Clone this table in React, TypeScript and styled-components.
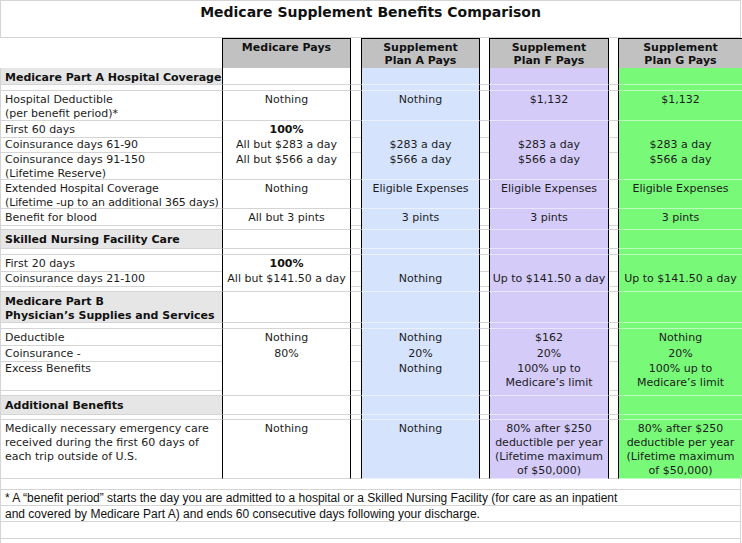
import React from 'react';
import styled, { createGlobalStyle, css } from 'styled-components';

const GlobalStyle = createGlobalStyle`
  html, body { margin: 0; padding: 0; background: #ffffff; }
  body { font-family: "DejaVu Sans", Verdana, sans-serif; color: #1c1c1c; }
`;

type Tone = 'm' | 'a' | 'f' | 'g';
type Lines = string | string[];

const COLS = '222px 129px 10px 119px 9px 120px 9px 124px';
const GRID = '#d4d4d4';
const TONES: Record<Tone, string> = {
  m: '#ffffff',
  a: '#d6e3fc',
  f: '#d4cbf9',
  g: '#78f978',
};

const Sheet = styled.div`
  width: 742px;
  height: 543px;
  overflow: hidden;
  display: flex;
  flex-direction: column;
`;

const TitleBar = styled.div`
  box-sizing: border-box;
  flex: none;
  width: 741px;
  height: 38px;
  border: 1px solid ${GRID};
  padding-top: 2px;
  text-align: center;
  font-size: 14px;
  line-height: 18px;
  font-weight: bold;
  color: #111;
`;

const Row = styled.div<{ $h: number }>`
  flex: none;
  display: grid;
  grid-template-columns: ${COLS};
  height: ${(p) => p.$h}px;
`;

const Cell = styled.div`
  box-sizing: border-box;
  border-bottom: 1px solid ${GRID};
  padding-top: 2px;
  font-size: 11px;
  line-height: 14px;
  white-space: nowrap;
`;

const Label = styled(Cell)<{ $section?: boolean; $tight?: boolean }>`
  border-left: 1px solid ${GRID};
  padding-left: 4px;
  overflow: hidden;
  letter-spacing: ${(p) => (p.$tight ? '-0.12px' : 'normal')};
  ${(p) =>
    p.$section &&
    css`
      background: #e6e6e6;
      font-weight: bold;
      padding-top: 3px;
      color: #111;
    `}
`;

const Gap = styled(Cell)``;

const Value = styled(Cell)<{ $tone: Tone }>`
  background: ${(p) => TONES[p.$tone]};
  text-align: center;
  border-left: 1px solid #000;
  border-right: ${(p) => (p.$tone === 'g' ? 'none' : '1px solid #000')};
  border-bottom-color: ${(p) => (p.$tone === 'm' ? GRID : 'rgba(255,255,255,0.5)')};
`;

const Strong = styled.b`
  font-weight: bold;
  color: #111;
`;

const HeadBlank = styled.div``;

const HeadCell = styled.div<{ $last?: boolean }>`
  box-sizing: border-box;
  background: #c1c1c1;
  border-top: 1px solid #000;
  border-left: 1px solid #000;
  border-right: ${(p) => (p.$last ? 'none' : '1px solid #000')};
  padding-top: 2px;
  text-align: center;
  font-size: 11px;
  line-height: 13px;
  font-weight: bold;
  color: #111;
`;

const FullCell = styled.div<{ $h: number }>`
  box-sizing: border-box;
  flex: none;
  width: 741px;
  height: ${(p) => p.$h}px;
  border-left: 1px solid ${GRID};
  border-right: 1px solid ${GRID};
  border-bottom: 1px solid ${GRID};
  padding: 1px 0 0 4px;
  font-family: "Liberation Sans", Arial, sans-serif;
  font-size: 12px;
  line-height: 14px;
  white-space: nowrap;
  color: #111;
`;

const renderLines = (v: Lines | undefined) => {
  if (v === undefined) return null;
  const arr = Array.isArray(v) ? v : [v];
  return arr.map((line, i) => (
    <React.Fragment key={i}>
      {i > 0 && <br />}
      {line}
    </React.Fragment>
  ));
};

type RowData =
  | { kind: 'section'; h: number; label: Lines }
  | { kind: 'spacer'; h: number }
  | {
      kind: 'data';
      h: number;
      label: Lines;
      m?: Lines;
      a?: Lines;
      f?: Lines;
      g?: Lines;
      boldM?: boolean;
      tight?: boolean;
    };

const rows: RowData[] = [
  { kind: 'section', h: 17, label: 'Medicare Part A Hospital Coverage' },
  { kind: 'spacer', h: 6 },
  {
    kind: 'data',
    h: 30,
    label: ['Hospital Deductible', '(per benefit period)*'],
    m: 'Nothing',
    a: 'Nothing',
    f: '$1,132',
    g: '$1,132',
  },
  { kind: 'data', h: 15, label: 'First 60 days', m: '100%', boldM: true },
  {
    kind: 'data',
    h: 15,
    label: 'Coinsurance days 61-90',
    m: 'All but $283 a day',
    a: '$283 a day',
    f: '$283 a day',
    g: '$283 a day',
  },
  {
    kind: 'data',
    h: 29,
    label: ['Coinsurance days 91-150', '(Lifetime Reserve)'],
    m: 'All but $566 a day',
    a: '$566 a day',
    f: '$566 a day',
    g: '$566 a day',
  },
  {
    kind: 'data',
    h: 29,
    label: ['Extended Hospital Coverage', '(Lifetime -up to an additional 365 days)'],
    m: 'Nothing',
    a: 'Eligible Expenses',
    f: 'Eligible Expenses',
    g: 'Eligible Expenses',
    tight: true,
  },
  {
    kind: 'data',
    h: 15,
    label: 'Benefit for blood',
    m: 'All but 3 pints',
    a: '3 pints',
    f: '3 pints',
    g: '3 pints',
  },
  { kind: 'spacer', h: 6 },
  { kind: 'section', h: 19, label: 'Skilled Nursing Facility Care' },
  { kind: 'spacer', h: 6 },
  { kind: 'data', h: 15, label: 'First 20 days', m: '100%', boldM: true },
  {
    kind: 'data',
    h: 16,
    label: 'Coinsurance days 21-100',
    m: 'All but $141.50 a day',
    a: 'Nothing',
    f: 'Up to $141.50 a day',
    g: 'Up to $141.50 a day',
  },
  { kind: 'spacer', h: 6 },
  { kind: 'section', h: 31, label: ['Medicare Part B', 'Physician\u2019s Supplies and Services'] },
  { kind: 'spacer', h: 6 },
  { kind: 'data', h: 16, label: 'Deductible', m: 'Nothing', a: 'Nothing', f: '$162', g: 'Nothing' },
  { kind: 'data', h: 15, label: 'Coinsurance -', m: '80%', a: '20%', f: '20%', g: '20%' },
  {
    kind: 'data',
    h: 30,
    label: 'Excess Benefits',
    a: 'Nothing',
    f: ['100% up to', 'Medicare\u2019s limit'],
    g: ['100% up to', 'Medicare\u2019s limit'],
  },
  { kind: 'spacer', h: 6 },
  { kind: 'section', h: 19, label: 'Additional Benefits' },
  { kind: 'spacer', h: 5 },
  {
    kind: 'data',
    h: 55,
    label: [
      'Medically necessary emergency care',
      'received during the first 60 days of',
      'each trip outside of U.S.',
    ],
    m: 'Nothing',
    a: 'Nothing',
    f: ['80% after $250', 'deductible per year', '(Lifetime maximum', 'of $50,000)'],
    g: ['80% after $250', 'deductible per year', '(Lifetime maximum', 'of $50,000)'],
  },
];

const SheetRow: React.FC<{ row: RowData }> = ({ row }) => {
  const label = row.kind === 'spacer' ? null : renderLines(row.label);
  const d = row.kind === 'data' ? row : null;
  return (
    <Row $h={row.h}>
      <Label $section={row.kind === 'section'} $tight={d?.tight}>
        {label}
      </Label>
      <Value $tone="m">
        {d && (d.boldM ? <Strong>{renderLines(d.m)}</Strong> : renderLines(d.m))}
      </Value>
      <Gap />
      <Value $tone="a">{d && renderLines(d.a)}</Value>
      <Gap />
      <Value $tone="f">{d && renderLines(d.f)}</Value>
      <Gap />
      <Value $tone="g">{d && renderLines(d.g)}</Value>
    </Row>
  );
};

export default function App() {
  return (
    <>
      <GlobalStyle />
      <Sheet>
        <TitleBar>Medicare Supplement Benefits Comparison</TitleBar>
        <Row $h={30}>
          <HeadBlank />
          <HeadCell>Medicare Pays</HeadCell>
          <HeadBlank />
          <HeadCell>
            Supplement
            <br />
            Plan A Pays
          </HeadCell>
          <HeadBlank />
          <HeadCell>
            Supplement
            <br />
            Plan F Pays
          </HeadCell>
          <HeadBlank />
          <HeadCell $last>
            Supplement
            <br />
            Plan G Pays
          </HeadCell>
        </Row>
        {rows.map((r, i) => (
          <SheetRow key={i} row={r} />
        ))}
        <FullCell $h={15} />
        <FullCell $h={16}>
          * A {'\u201C'}benefit period{'\u201D'} starts the day you are admitted to a hospital or a Skilled
          Nursing Facility (for care as an inpatient
        </FullCell>
        <FullCell $h={16}>
          and covered by Medicare Part A) and ends 60 consecutive days following your discharge.
        </FullCell>
        <FullCell $h={17} />
        <FullCell $h={10} />
      </Sheet>
    </>
  );
}
